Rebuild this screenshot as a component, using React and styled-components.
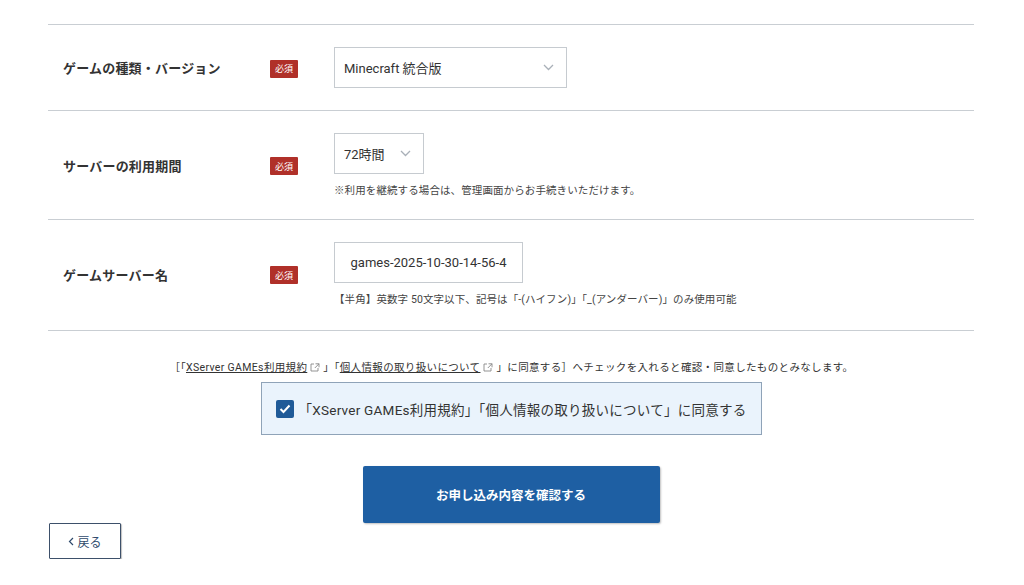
import React from "react";
import styled, { createGlobalStyle } from "styled-components";

const Global = createGlobalStyle`
  html, body { margin: 0; padding: 0; background: #fff; }
  body { font-family: Roboto, "Noto Sans CJK JP", sans-serif; color: #333; }
  * { box-sizing: border-box; }
`;

const Page = styled.div`
  width: 926px;
  margin: 0 0 0 48px;
  padding-top: 24px;
`;

const Table = styled.div`
  border-top: 1px solid #c9ced3;
`;

const Row = styled.div`
  display: grid;
  grid-template-columns: 207px 64px 1fr;
  align-items: center;
  padding: 22px 0 ${(p) => p.$pb || 22}px 15px;
  border-bottom: 1px solid #c9ced3;
`;

const Label = styled.div`
  font-size: 13px;
  font-weight: 700;
  color: #333;
  letter-spacing: 0.2px;
`;

const Badge = styled.span`
  display: inline-flex;
  align-items: center;
  justify-content: center;
  width: 28px;
  height: 18px;
  background: #b03029;
  color: #fff;
  font-size: 9px;
  border-radius: 1px;
`;

const Field = styled.div`
  display: flex;
  flex-direction: column;
  align-items: flex-start;
`;

const SelectBox = styled.div`
  width: ${(p) => p.$w}px;
  height: 41px;
  border: 1px solid #c6cbd0;
  display: flex;
  align-items: center;
  justify-content: space-between;
  padding: 0 12px 0 9px;
  font-size: 13px;
  color: #333;
  background: #fff;
`;

const InputBox = styled.div`
  width: ${(p) => p.$w}px;
  height: 41px;
  border: 1px solid #c6cbd0;
  display: flex;
  align-items: center;
  justify-content: center;
  font-size: 13px;
  color: #333;
`;

const Note = styled.div`
  margin-top: 8px;
  font-size: 10.5px;
  color: #444;
  letter-spacing: 0.1px;
`;

const Chevron = () => (
  <svg width="11" height="7" viewBox="0 0 11 7" fill="none">
    <path d="M1 1l4.5 4.5L10 1" stroke="#a9b0b8" strokeWidth="1.3" />
  </svg>
);

const Agreement = styled.div`
  margin-top: 28px;
  text-align: center;
  font-size: 10.5px;
  letter-spacing: 0.35px;
  color: #333;
  margin-left: 1px;
`;

const Link = styled.a`
  color: #333;
  text-decoration: underline;
`;

const Ext = () => (
  <svg width="10" height="9" viewBox="0 0 10 9" style={{ margin: "0 3px", verticalAlign: "-1px" }} fill="none">
    <path d="M4 1H1v7h7V5" stroke="#888" strokeWidth="0.9" />
    <path d="M5.5 0.8H9v3.5M9 0.8L4.8 5" stroke="#888" strokeWidth="0.9" />
  </svg>
);

const CheckWrap = styled.div`
  display: flex;
  justify-content: center;
  margin-top: 8px;
`;

const CheckBoxPanel = styled.label`
  width: 501px;
  height: 53px;
  display: flex;
  align-items: center;
  padding-left: 14px;
  gap: 5px;
  background: #eaf3fc;
  border: 1px solid #8fa3b8;
  font-size: 13.5px;
  letter-spacing: 0.25px;
  color: #333;
`;

const Tick = styled.span`
  width: 18px;
  height: 18px;
  border-radius: 2px;
  background: #1f5a98;
  display: inline-flex;
  align-items: center;
  justify-content: center;
`;

const SubmitWrap = styled.div`
  display: flex;
  justify-content: center;
  margin-top: 31px;
`;

const Submit = styled.button`
  width: 297px;
  height: 57px;
  background: #1e5fa3;
  color: #fff;
  border: none;
  border-radius: 2px;
  font-family: inherit;
  font-weight: 700;
  font-size: 12.5px;
  box-shadow: 1px 1px 2px rgba(0, 0, 0, 0.25);
`;

const Back = styled.button`
  width: 72px;
  height: 36px;
  background: #fff;
  border: 1px solid #3d506a;
  border-radius: 1px;
  color: #2e4a6c;
  font-family: inherit;
  font-size: 12px;
  box-shadow: 1px 1px 1px rgba(0, 0, 0, 0.25);
  margin: 0 0 0 1px;
  display: flex;
  align-items: center;
  justify-content: center;
  gap: 3px;
`;

export default function App() {
  return (
    <>
      <Global />
      <Page>
        <Table>
          <Row $pb={22}>
            <Label>ゲームの種類・バージョン</Label>
            <div><Badge>必須</Badge></div>
            <Field>
              <SelectBox $w={233}>
                <span>Minecraft 統合版</span>
                <Chevron />
              </SelectBox>
            </Field>
          </Row>
          <Row $pb={22}>
            <Label>サーバーの利用期間</Label>
            <div><Badge>必須</Badge></div>
            <Field>
              <SelectBox $w={90}>
                <span>72時間</span>
                <Chevron />
              </SelectBox>
              <Note>※利用を継続する場合は、管理画面からお手続きいただけます。</Note>
            </Field>
          </Row>
          <Row $pb={24}>
            <Label>ゲームサーバー名</Label>
            <div><Badge>必須</Badge></div>
            <Field>
              <InputBox $w={189}>games-2025-10-30-14-56-4</InputBox>
              <Note>【半角】英数字 50文字以下、記号は「-(ハイフン)」「_(アンダーバー)」のみ使用可能</Note>
            </Field>
          </Row>
        </Table>
        <Agreement>
          ［「<Link>XServer GAMEs利用規約</Link>
          <Ext />」「<Link>個人情報の取り扱いについて</Link>
          <Ext />」に同意する］へチェックを入れると確認・同意したものとみなします。
        </Agreement>
        <CheckWrap>
          <CheckBoxPanel>
            <Tick>
              <svg width="12" height="10" viewBox="0 0 12 10" fill="none">
                <path d="M1.5 5l3 3 6-6.5" stroke="#fff" strokeWidth="2" />
              </svg>
            </Tick>
            <span>「XServer GAMEs利用規約」「個人情報の取り扱いについて」に同意する</span>
          </CheckBoxPanel>
        </CheckWrap>
        <SubmitWrap>
          <Submit>お申し込み内容を確認する</Submit>
        </SubmitWrap>
        <Back>
          <svg width="6" height="9" viewBox="0 0 6 9" fill="none">
            <path d="M5 1L1.5 4.5 5 8" stroke="#2e4a6c" strokeWidth="1.2" />
          </svg>
          戻る
        </Back>
      </Page>
    </>
  );
}
